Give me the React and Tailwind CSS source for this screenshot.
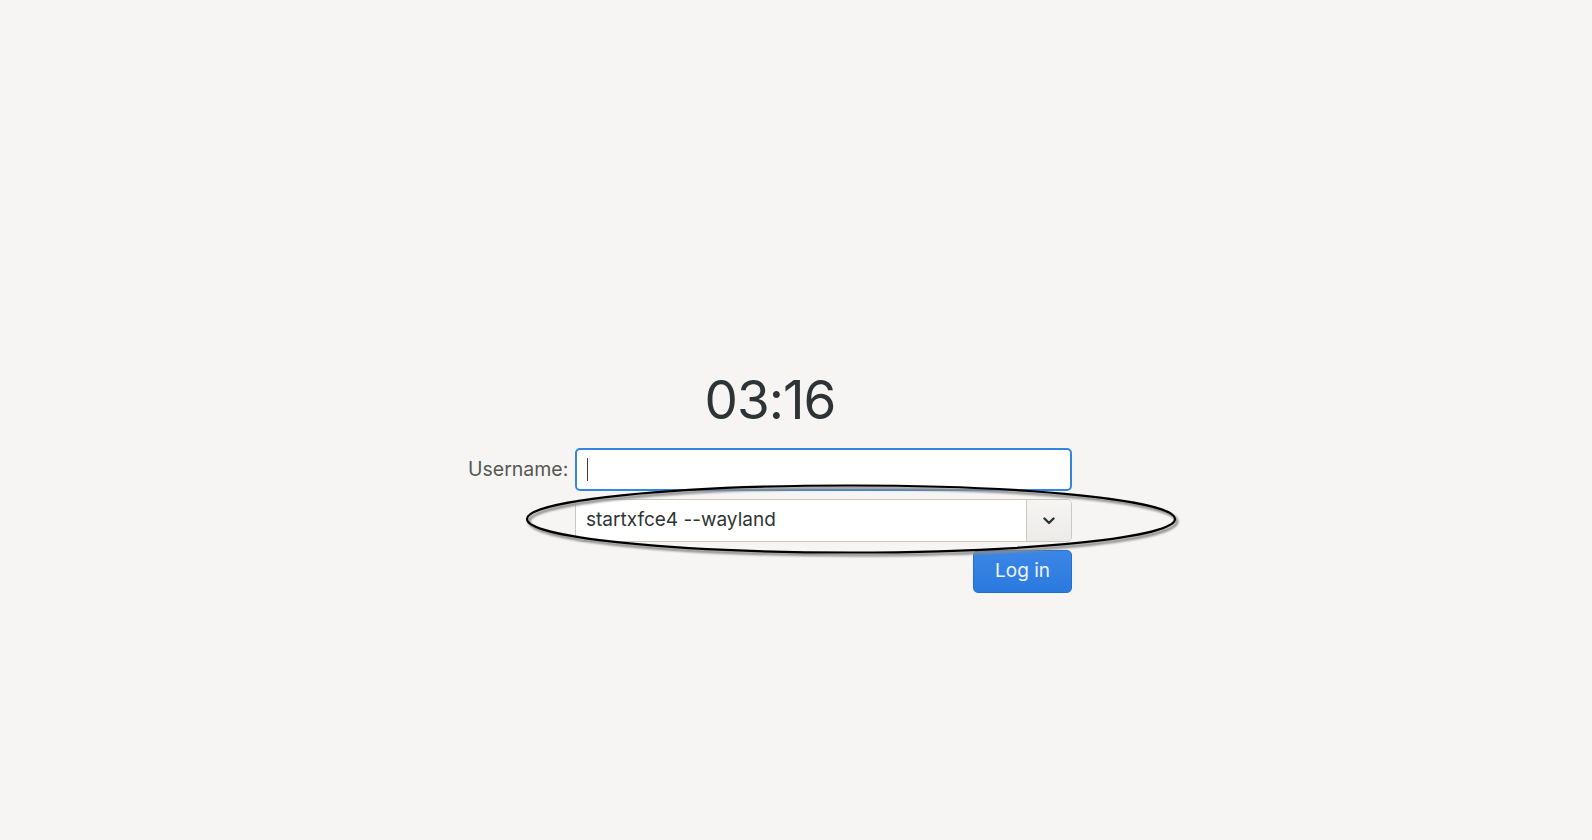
import React from "react";

export default function App() {
  const font = { fontFamily: "Inter, 'Noto Sans', 'Liberation Sans', sans-serif" };
  return (
    <div className="relative w-full h-[840px] bg-[#f6f5f4] overflow-hidden" style={font}>
      <div className="pt-[370px] pl-[468px]">
        <div className="w-[604px] flex flex-col">
          <div className="text-center text-[53px] leading-[60px] text-[#2e3436] tracking-[-1px] mb-[18px]">03:16</div>
          <div className="grid grid-cols-[99px_497px] gap-x-2 gap-y-2 items-center">
            <div className="text-[19.5px] text-[#555753] whitespace-nowrap">Username:</div>
            <div className="h-[43px] rounded-[5px] border-2 border-[#3584e4] bg-white flex items-center pl-[10px]">
              <div className="w-px h-[23px] bg-[#3d3d3d]" />
            </div>
            <div />
            <div className="h-[43px] rounded-[5px] border border-[#cdc7c2] bg-white flex overflow-hidden">
              <div className="flex-1 flex items-center pl-[10px] text-[19px] text-[#2e3436]">startxfce4 --wayland</div>
              <div className="w-[45px] border-l border-[#cdc7c2] bg-gradient-to-b from-[#f6f5f4] to-[#edebe9] flex items-center justify-center">
                <svg width="12" height="8" viewBox="0 0 12 8">
                  <path d="M1.5 1.5 L6 6 L10.5 1.5" fill="none" stroke="#2e3436" strokeWidth="2.4" strokeLinecap="round" strokeLinejoin="round" />
                </svg>
              </div>
            </div>
            <div />
            <div className="flex justify-end">
              <button className="w-[99px] h-[43px] rounded-[5px] border border-[#1f6fd4] bg-gradient-to-b from-[#3a87e6] to-[#2a79de] text-[19px] text-[#eef4fc]">Log in</button>
            </div>
          </div>
        </div>
      </div>
      <svg className="absolute left-0 top-0 pointer-events-none" width="1592" height="840">
        <defs>
          <filter id="blur1" x="-10%" y="-50%" width="120%" height="200%">
            <feGaussianBlur stdDeviation="1.2" />
          </filter>
        </defs>
        <ellipse cx="853" cy="521.5" rx="324" ry="33.5" fill="none" stroke="#8a8a8a" strokeWidth="3" filter="url(#blur1)" />
        <ellipse cx="851" cy="519" rx="324" ry="33.5" fill="none" stroke="#000" strokeWidth="2.2" />
      </svg>
    </div>
  );
}
